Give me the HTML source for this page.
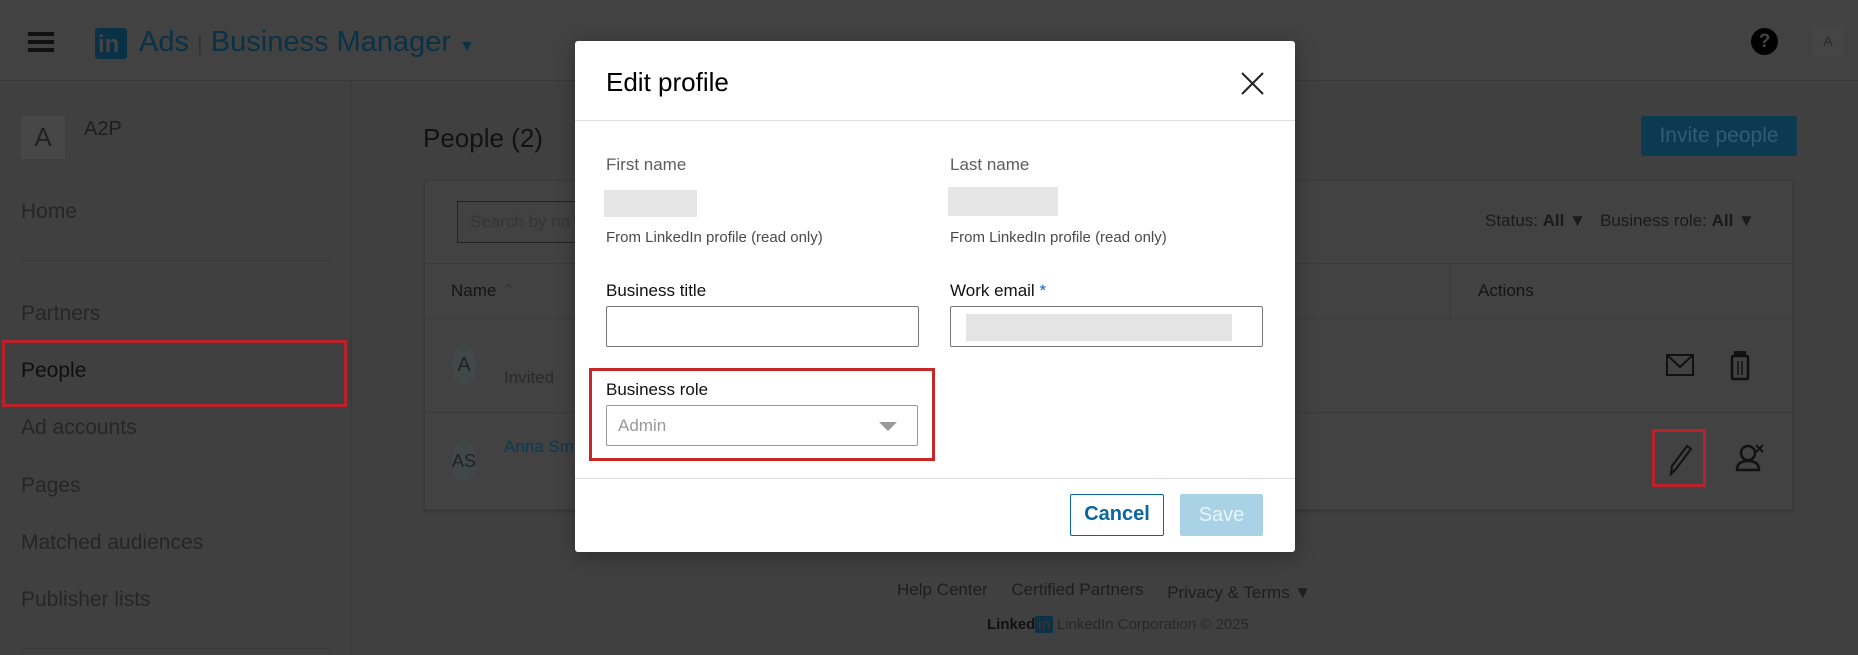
<!DOCTYPE html>
<html style="background:#404040"><head><meta charset="utf-8"><style>
*{box-sizing:border-box;margin:0;padding:0}
html,body{background:#404040}
body{width:1858px;height:655px;overflow:hidden;font-family:"Liberation Sans",sans-serif;position:relative;color:#1a1a1a}
.a{position:absolute;white-space:nowrap}
.side{font-size:21px;color:#262626}
</style></head><body>
<div class="a" style="left:0;top:0;width:1858px;height:81px;border-bottom:1px solid #383838;background:#424242"></div>
<div class="a" style="left:28px;top:32px;width:26px;height:4px;background:#111;box-shadow:0 8px 0 #111,0 16px 0 #111"></div>
<div class="a" style="left:95px;top:28px;width:32px;height:31px;background:#0b3147;border-radius:3px;color:#444;font-weight:bold;font-size:24px;padding:3px 0 0 3px">in</div>
<div class="a" style="left:139px;top:26px;font-size:29px;color:#0b3147">Ads <span style="font-size:22px;color:#333">|</span> Business Manager <span style="font-size:16px;color:#0b3147">▼</span></div>
<div class="a" style="left:1751px;top:28px;width:27px;height:27px;border-radius:50%;background:#000;color:#444;font-weight:bold;font-size:19px;text-align:center;line-height:27px">?</div>
<div class="a" style="left:1812px;top:26px;width:32px;height:30px;background:#454545;color:#2a2a2a;font-size:14px;text-align:center;line-height:30px">A</div>
<div class="a" style="left:350px;top:82px;width:2px;height:573px;background:#3b3b3b"></div>
<div class="a" style="left:21px;top:116px;width:44px;height:43px;background:#474747;color:#222;font-size:26px;text-align:center;line-height:43px">A</div>
<div class="a" style="left:84px;top:118px;font-size:20px;color:#1e1e1e">A2P</div>
<div class="a side" style="left:21px;top:200px">Home</div>
<div class="a" style="left:21px;top:260px;width:310px;height:1px;background:#393939"></div>
<div class="a side" style="left:21px;top:302px">Partners</div>
<div class="a side" style="left:21px;top:359px;color:#0f0f0f">People</div>
<div class="a" style="left:2px;top:340px;width:345px;height:67px;border:3px solid #b8222a"></div>
<div class="a side" style="left:21px;top:416px">Ad accounts</div>
<div class="a side" style="left:21px;top:474px">Pages</div>
<div class="a side" style="left:21px;top:531px">Matched audiences</div>
<div class="a side" style="left:21px;top:588px">Publisher lists</div>
<div class="a" style="left:21px;top:648px;width:310px;height:1px;background:#393939"></div>
<div class="a" style="left:423px;top:123px;font-size:26px;color:#121212">People (2)</div>
<div class="a" style="left:1641px;top:116px;width:156px;height:40px;background:#0c3a50;color:#2f5d73;font-size:21px;text-align:center;line-height:40px;border-radius:3px">Invite people</div>
<div class="a" style="left:424px;top:180px;width:1369px;height:330px;background:#424242;border:1px solid #3a3a3a;box-shadow:0 2px 2px #383838"></div>
<div class="a" style="left:457px;top:201px;width:130px;height:42px;border:1px solid #222;border-right:none;color:#353535;font-size:17px;padding:10px 12px">Search by na</div>
<div class="a" style="left:1485px;top:211px;font-size:17px;color:#1a1a1a">Status: <b>All</b> ▼&nbsp;&nbsp; Business role: <b>All</b> ▼</div>
<div class="a" style="left:424px;top:263px;width:1369px;height:1px;background:#3a3a3a"></div>
<div class="a" style="left:424px;top:318px;width:1369px;height:1px;background:#3a3a3a"></div>
<div class="a" style="left:424px;top:412px;width:1369px;height:1px;background:#3a3a3a"></div>
<div class="a" style="left:1450px;top:263px;width:1px;height:55px;background:#3a3a3a"></div>
<div class="a" style="left:451px;top:281px;font-size:17px;color:#141414">Name <span style="color:#333">⌃</span></div>
<div class="a" style="left:1478px;top:281px;font-size:17px;color:#141414">Actions</div>
<div class="a" style="left:452px;top:345px;width:24px;height:40px;border-radius:50%;background:#414848;color:#222;font-size:20px;text-align:center;line-height:40px">A</div>
<div class="a" style="left:504px;top:368px;font-size:17px;color:#2a2a2a">Invited</div>
<div class="a" style="left:452px;top:441px;width:24px;height:40px;border-radius:50%;background:#414848;color:#222;font-size:18px;text-align:center;line-height:40px">AS</div>
<div class="a" style="left:504px;top:437px;font-size:17px;color:#0c3a50">Anna Sm</div>
<svg class="a" style="left:1660px;top:350px" width="120" height="40" viewBox="0 0 120 40"><rect x="7" y="5" width="26" height="20" fill="none" stroke="#111" stroke-width="2"/><path d="M7 5 L20 17 L33 5" fill="none" stroke="#111" stroke-width="2"/><rect x="72" y="6" width="16" height="23" rx="1" fill="none" stroke="#111" stroke-width="2.5"/><rect x="74" y="1" width="12" height="5" fill="#111"/><path d="M78 11V25M82 11V25" stroke="#111" stroke-width="1.5"/></svg>
<div class="a" style="left:1652px;top:429px;width:54px;height:58px;border:3px solid #b8222a"></div>
<svg class="a" style="left:1660px;top:436px" width="120" height="44" viewBox="0 0 120 44"><path d="M11 38 L12 30 L27 10 L31 13 L16 33 Z" fill="none" stroke="#111" stroke-width="2"/><circle cx="88" cy="17" r="7" fill="none" stroke="#111" stroke-width="2.5"/><path d="M77 34 Q77 25 88 25 Q99 25 99 34 Z" fill="none" stroke="#111" stroke-width="2.5"/><path d="M96 9 L103 16 M103 9 L96 16" stroke="#111" stroke-width="2"/></svg>
<div class="a" style="left:897px;top:580px;font-size:17px;color:#1e1e1e">Help Center&nbsp;&nbsp;&nbsp;&nbsp; Certified Partners&nbsp;&nbsp;&nbsp;&nbsp; <span style="position:relative;top:3px">Privacy &amp; Terms ▼</span></div>
<div class="a" style="left:987px;top:616px;font-size:15px;color:#111;font-weight:bold">Linked<span style="background:#0b3147;color:#333;padding:0 2px">in</span> <span style="font-weight:normal;color:#282828">LinkedIn Corporation © 2025</span></div>
<div class="a" style="left:575px;top:41px;width:720px;height:511px;background:#fff;border-radius:3px;box-shadow:0 4px 20px rgba(0,0,0,.3)"></div>
<div class="a" style="left:606px;top:67px;font-size:26px;color:#000">Edit profile</div>
<svg class="a" style="left:1240px;top:71px" width="25" height="25" viewBox="0 0 25 25"><path d="M2 2L23 23M23 2L2 23" stroke="#222" stroke-width="2"/></svg>
<div class="a" style="left:575px;top:120px;width:720px;height:1px;background:#ddd"></div>
<div class="a" style="left:606px;top:155px;font-size:17px;color:#5e5e5e">First name</div>
<div class="a" style="left:604px;top:190px;width:93px;height:27px;background:#e6e6e6"></div>
<div class="a" style="left:606px;top:229px;font-size:15px;color:#4a4a4a">From LinkedIn profile (read only)</div>
<div class="a" style="left:950px;top:155px;font-size:17px;color:#5e5e5e">Last name</div>
<div class="a" style="left:948px;top:187px;width:110px;height:29px;background:#e6e6e6"></div>
<div class="a" style="left:950px;top:229px;font-size:15px;color:#4a4a4a">From LinkedIn profile (read only)</div>
<div class="a" style="left:606px;top:281px;font-size:17px;color:#111">Business title</div>
<div class="a" style="left:606px;top:306px;width:313px;height:41px;border:1px solid #777;border-radius:2px"></div>
<div class="a" style="left:950px;top:281px;font-size:17px;color:#111">Work email <span style="color:#0a66c2">*</span></div>
<div class="a" style="left:950px;top:306px;width:313px;height:41px;border:1px solid #777;border-radius:2px"></div>
<div class="a" style="left:966px;top:314px;width:266px;height:27px;background:#e4e4e4"></div>
<div class="a" style="left:589px;top:368px;width:346px;height:93px;border:3px solid #c62828"></div>
<div class="a" style="left:606px;top:380px;font-size:17px;color:#111">Business role</div>
<div class="a" style="left:606px;top:405px;width:312px;height:41px;border:1px solid #999;border-radius:2px;color:#999;font-size:17px;padding:10px 11px">Admin</div>
<div class="a" style="left:879px;top:422px;width:0;height:0;border-left:9px solid transparent;border-right:9px solid transparent;border-top:9px solid #999"></div>
<div class="a" style="left:575px;top:478px;width:720px;height:1px;background:#ddd"></div>
<div class="a" style="left:1070px;top:494px;width:94px;height:42px;border:1.5px solid #0a66a0;border-radius:2px;color:#0a66a0;font-size:20px;text-align:center;line-height:39px;font-weight:bold">Cancel</div>
<div class="a" style="left:1180px;top:494px;width:83px;height:42px;background:#a9d2e6;border-radius:2px;color:#e8f4fa;font-size:20px;text-align:center;line-height:42px">Save</div>
</body></html>
